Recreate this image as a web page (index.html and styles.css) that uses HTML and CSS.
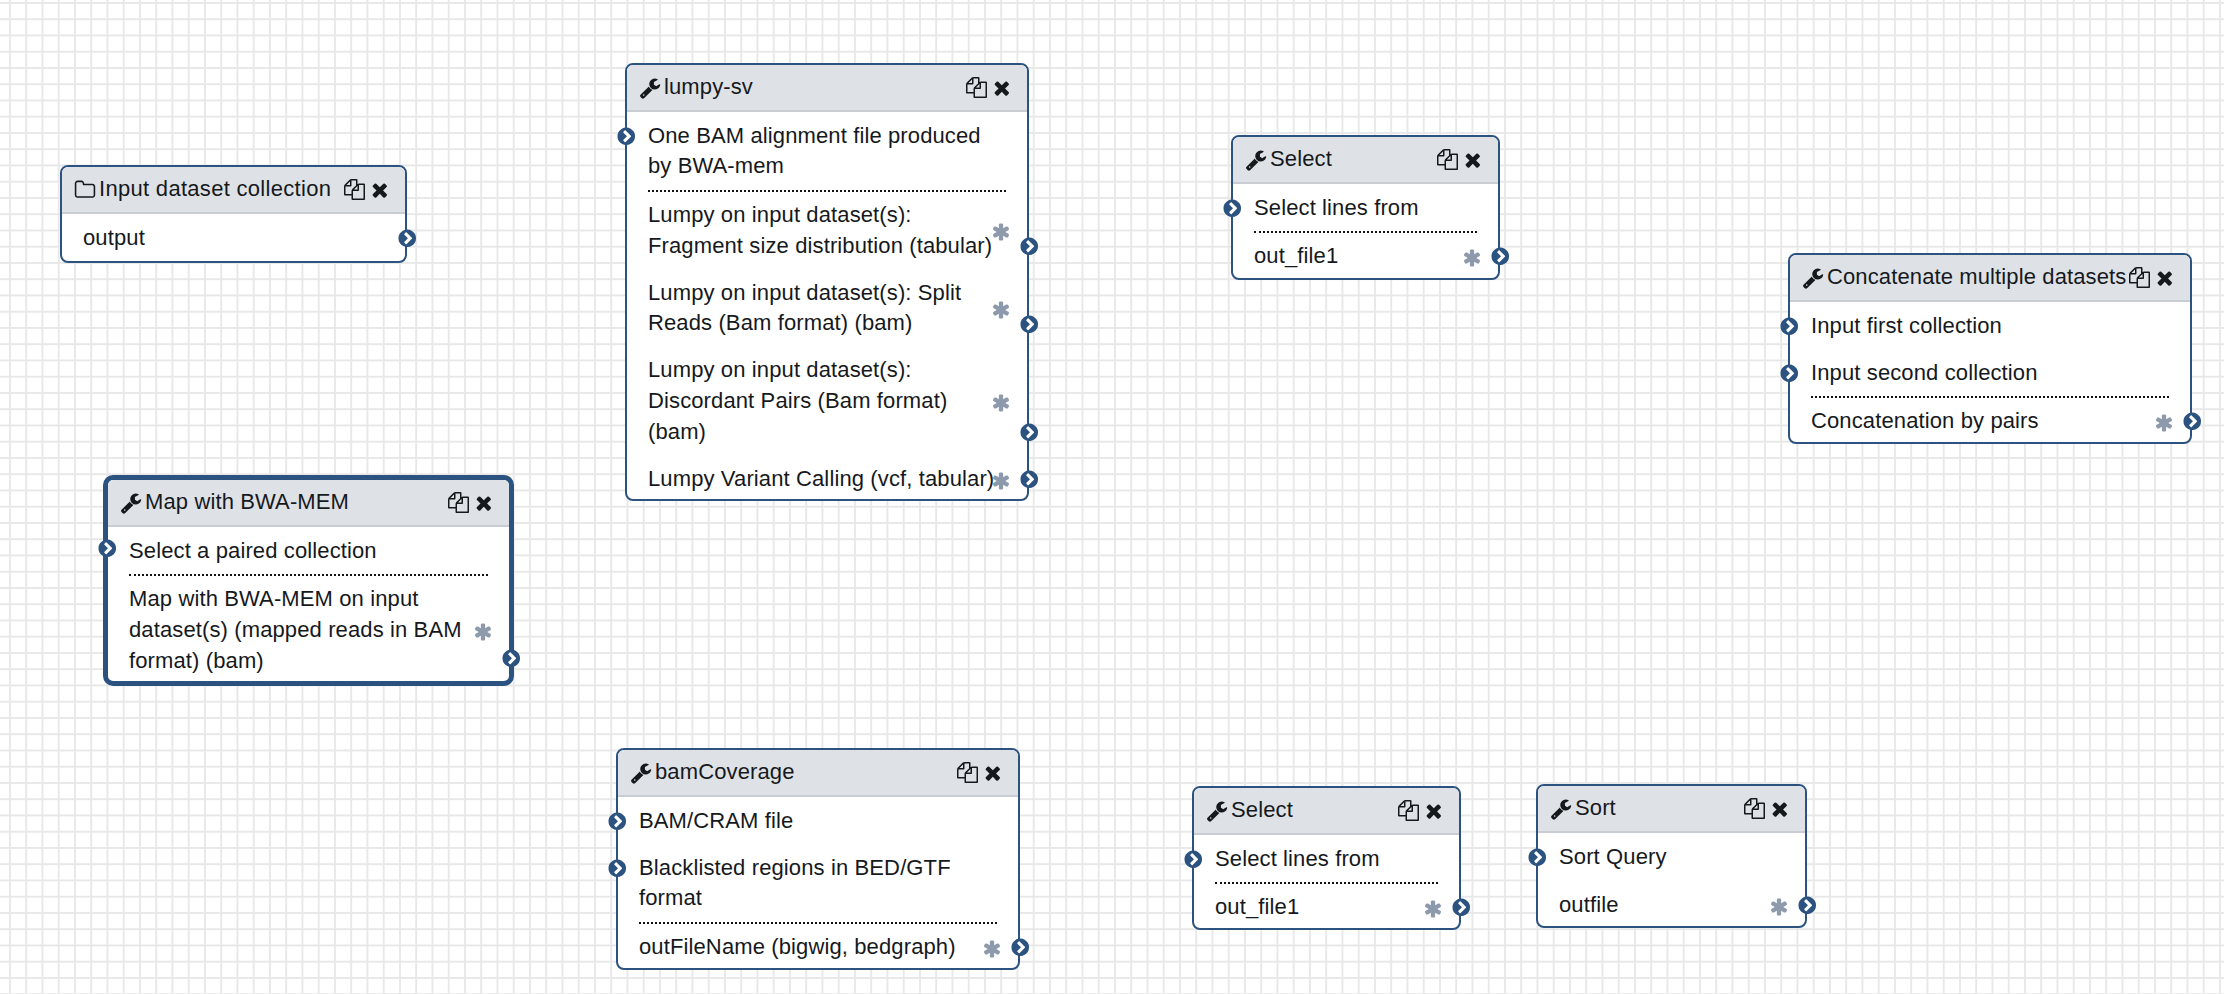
FILE: index.html
```html
<!DOCTYPE html>
<html lang="en">
<head>
  <meta charset="UTF-8">
  <title>Workflow editor</title>
  <link rel="stylesheet" href="styles.css">
</head>
<body>
  <svg class="defs" width="0" height="0">
    <symbol id="i-wrench" viewBox="0 0 1792 1792"><path d="M448 1472q0-26-19-45t-45-19-45 19-19 45 19 45 45 19 45-19 19-45zm644-420l-682 682q-37 37-90 37-52 0-91-37l-106-108q-38-36-38-90 0-53 38-91l681-681q39 98 114.500 173.500t173.500 114.500zm634-435q0 39-23 106-47 134-164.500 217.500t-258.500 83.500q-185 0-316.500-131.500t-131.500-316.500 131.500-316.500 316.500-131.500q58 0 121.500 16.500t107.500 46.500q16 11 16 28t-16 28l-293 169v224l193 107q5-3 79-48.500t135.500-81 70.500-35.500q15 0 23.500 10t8.500 25z"/></symbol>
    <symbol id="i-folder" viewBox="0 0 1792 1792"><path d="M1600 1312v-704q0-40-28-68t-68-28h-704q-40 0-68-28t-28-68v-64q0-40-28-68t-68-28h-320q-40 0-68 28t-28 68v960q0 40 28 68t68 28h1216q40 0 68-28t28-68zm128-704v704q0 92-66 158t-158 66h-1216q-92 0-158-66t-66-158v-960q0-92 66-158t158-66h320q92 0 158 66t66 158v32h672q92 0 158 66t66 158z"/></symbol>
    <symbol id="i-copy" viewBox="0 0 1792 1792"><path d="M1696 384q40 0 68 28t28 68v1216q0 40-28 68t-68 28h-960q-40 0-68-28t-28-68v-288h-544q-40 0-68-28t-28-68v-672q0-40 20-88t48-76l408-408q28-28 76-48t88-20h416q40 0 68 28t28 68v328q68-40 128-40h416zm-544 213l-299 299h299v-299zm-640-384l-299 299h299v-299zm196 647l316-316v-416h-384v416q0 40-28 68t-68 28h-416v640h512v-256q0-40 20-88t48-76zm956 804v-1152h-384v416q0 40-28 68t-68 28h-416v640h896z"/></symbol>
    <symbol id="i-times" viewBox="0 0 1792 1792"><path d="M1490 1322q0 40-28 68l-136 136q-28 28-68 28t-68-28l-294-294-294 294q-28 28-68 28t-68-28l-136-136q-28-28-28-68t28-68l294-294-294-294q-28-28-28-68t28-68l136-136q28-28 68-28t68 28l294 294 294-294q28-28 68-28t68 28l136 136q28 28 28 68t-28 68l-294 294 294 294q28 28 28 68z"/></symbol>
    <symbol id="i-star" viewBox="0 0 1792 1792"><path d="M1546 1050q46 26 59.500 77.500t-12.500 97.500l-64 110q-26 46-77.500 59.500t-97.500-12.500l-266-153v307q0 52-38 90t-90 38h-128q-52 0-90-38t-38-90v-307l-266 153q-46 26-97.500 12.500t-77.500-59.500l-64-110q-26-46-12.500-97.500t59.500-77.500l266-154-266-154q-46-26-59.500-77.500t12.500-97.500l64-110q26-46 77.500-59.500t97.500 12.500l266 153v-307q0-52 38-90t90-38h128q52 0 90 38t38 90v307l266-153q46-26 97.500-12.500t77.500 59.500l64 110q26 46 12.500 97.500t-59.500 77.500l-266 154z"/></symbol>
    <symbol id="i-port" viewBox="0 0 1792 1792"><path fill="#fff" d="M896 300a600 600 0 1 0 1 0z"/><path d="M845 1395l454-454q19-19 19-45t-19-45l-454-454q-19-19-45-19t-45 19l-102 102q-19 19-19 45t19 45l307 307-307 307q-19 19-19 45t19 45l102 102q19 19 45 19t45-19zm819-499q0 209-103 385.500t-279.500 279.500-385.500 103-385.500-103-279.500-279.500-103-385.500 103-385.500 279.500-279.500 385.500-103 385.500 103 279.500 279.500 103 385.500z"/></symbol>
  </svg>

  <div class="canvas">

    <div class="node node-input">
      <div class="node-head">
        <svg class="ic-type"><use href="#i-folder"/></svg>
        <span class="node-title">Input dataset collection</span>
        <svg class="ic-copy"><use href="#i-copy"/></svg>
        <svg class="ic-close"><use href="#i-times"/></svg>
      </div>
      <div class="node-body">
        <div class="row out">output<svg class="port"><use href="#i-port"/></svg></div>
      </div>
    </div>

    <div class="node node-map active">
      <div class="node-head">
        <svg class="ic-type"><use href="#i-wrench"/></svg>
        <span class="node-title">Map with BWA-MEM</span>
        <svg class="ic-copy"><use href="#i-copy"/></svg>
        <svg class="ic-close"><use href="#i-times"/></svg>
      </div>
      <div class="node-body">
        <div class="row in"><svg class="port"><use href="#i-port"/></svg>Select a paired collection</div>
        <div class="rule"></div>
        <div class="row out">Map with BWA-MEM on input dataset(s) (mapped reads in BAM format) (bam)<svg class="star"><use href="#i-star"/></svg><svg class="port"><use href="#i-port"/></svg></div>
      </div>
    </div>

    <div class="node node-lumpy">
      <div class="node-head">
        <svg class="ic-type"><use href="#i-wrench"/></svg>
        <span class="node-title">lumpy-sv</span>
        <svg class="ic-copy"><use href="#i-copy"/></svg>
        <svg class="ic-close"><use href="#i-times"/></svg>
      </div>
      <div class="node-body">
        <div class="row in"><svg class="port"><use href="#i-port"/></svg>One BAM alignment file produced by BWA-mem</div>
        <div class="rule"></div>
        <div class="row out">Lumpy on input dataset(s): Fragment size distribution (tabular)<svg class="star"><use href="#i-star"/></svg><svg class="port"><use href="#i-port"/></svg></div>
        <div class="row out">Lumpy on input dataset(s): Split Reads (Bam format) (bam)<svg class="star"><use href="#i-star"/></svg><svg class="port"><use href="#i-port"/></svg></div>
        <div class="row out">Lumpy on input dataset(s): Discordant Pairs (Bam format) (bam)<svg class="star"><use href="#i-star"/></svg><svg class="port"><use href="#i-port"/></svg></div>
        <div class="row out">Lumpy Variant Calling (vcf, tabular)<svg class="star"><use href="#i-star"/></svg><svg class="port"><use href="#i-port"/></svg></div>
      </div>
    </div>

    <div class="node node-cov">
      <div class="node-head">
        <svg class="ic-type"><use href="#i-wrench"/></svg>
        <span class="node-title">bamCoverage</span>
        <svg class="ic-copy"><use href="#i-copy"/></svg>
        <svg class="ic-close"><use href="#i-times"/></svg>
      </div>
      <div class="node-body">
        <div class="row in"><svg class="port"><use href="#i-port"/></svg>BAM/CRAM file</div>
        <div class="row in"><svg class="port"><use href="#i-port"/></svg>Blacklisted regions in BED/GTF format</div>
        <div class="rule"></div>
        <div class="row out">outFileName (bigwig, bedgraph)<svg class="star"><use href="#i-star"/></svg><svg class="port"><use href="#i-port"/></svg></div>
      </div>
    </div>

    <div class="node node-sel1">
      <div class="node-head">
        <svg class="ic-type"><use href="#i-wrench"/></svg>
        <span class="node-title">Select</span>
        <svg class="ic-copy"><use href="#i-copy"/></svg>
        <svg class="ic-close"><use href="#i-times"/></svg>
      </div>
      <div class="node-body">
        <div class="row in"><svg class="port"><use href="#i-port"/></svg>Select lines from</div>
        <div class="rule"></div>
        <div class="row out">out_file1<svg class="star"><use href="#i-star"/></svg><svg class="port"><use href="#i-port"/></svg></div>
      </div>
    </div>

    <div class="node node-sel2">
      <div class="node-head">
        <svg class="ic-type"><use href="#i-wrench"/></svg>
        <span class="node-title">Select</span>
        <svg class="ic-copy"><use href="#i-copy"/></svg>
        <svg class="ic-close"><use href="#i-times"/></svg>
      </div>
      <div class="node-body">
        <div class="row in"><svg class="port"><use href="#i-port"/></svg>Select lines from</div>
        <div class="rule"></div>
        <div class="row out">out_file1<svg class="star"><use href="#i-star"/></svg><svg class="port"><use href="#i-port"/></svg></div>
      </div>
    </div>

    <div class="node node-sort">
      <div class="node-head">
        <svg class="ic-type"><use href="#i-wrench"/></svg>
        <span class="node-title">Sort</span>
        <svg class="ic-copy"><use href="#i-copy"/></svg>
        <svg class="ic-close"><use href="#i-times"/></svg>
      </div>
      <div class="node-body">
        <div class="row in"><svg class="port"><use href="#i-port"/></svg>Sort Query</div>
        <div class="row out">outfile<svg class="star"><use href="#i-star"/></svg><svg class="port"><use href="#i-port"/></svg></div>
      </div>
    </div>

    <div class="node node-concat">
      <div class="node-head">
        <svg class="ic-type"><use href="#i-wrench"/></svg>
        <span class="node-title">Concatenate multiple datasets</span>
        <svg class="ic-copy"><use href="#i-copy"/></svg>
        <svg class="ic-close"><use href="#i-times"/></svg>
      </div>
      <div class="node-body">
        <div class="row in"><svg class="port"><use href="#i-port"/></svg>Input first collection</div>
        <div class="row in"><svg class="port"><use href="#i-port"/></svg>Input second collection</div>
        <div class="rule"></div>
        <div class="row out">Concatenation by pairs<svg class="star"><use href="#i-star"/></svg><svg class="port"><use href="#i-port"/></svg></div>
      </div>
    </div>

  </div>
</body>
</html>
```

FILE: styles.css
```css
html, body {
  margin: 0;
  height: 100%;
  overflow: hidden;
}

body {
  font-family: "Liberation Sans", Arial, sans-serif;
  font-size: 22px;
  line-height: 30.7px;
  letter-spacing: 0.12px;
  color: #16191c;
  background: #fff;
}

.defs {
  position: absolute;
}

.canvas {
  position: relative;
  width: 2224px;
  height: 994px;
  background-color: #fff;
  background-image:
    linear-gradient(#e8e8e8 2px, transparent 2px),
    linear-gradient(90deg, #e8e8e8 2px, transparent 2px);
  background-size: 16.25px 16.25px;
  background-position: 9px 2px;
}

.node {
  position: absolute;
  box-sizing: border-box;
  border: 2px solid #2c5380;
  border-radius: 8px;
  background: #fff;
}

.node.active {
  border-width: 5px;
  border-radius: 10px;
}

.node-input { left: 60px; top: 165px; width: 347px; }
.node-map { left: 103px; top: 475px; width: 411px; }
.node-lumpy { left: 625px; top: 63px; width: 404px; }
.node-cov { left: 616px; top: 748px; width: 404px; }
.node-sel1 { left: 1231px; top: 135px; width: 269px; }
.node-sel2 { left: 1192px; top: 786px; width: 269px; }
.node-sort { left: 1536px; top: 784px; width: 271px; }
.node-concat { left: 1788px; top: 253px; width: 404px; }

.node-input .node-title {
  letter-spacing: 0.3px;
}

.node-input .node-body {
  padding-bottom: 8px;
}

.node-sel1 .node-body {
  padding-bottom: 6px;
}

.node-sort .node-body {
  padding-bottom: 6px;
}

.node-sort .row + .row {
  margin-top: 17.5px;
}

.node-head {
  display: flex;
  align-items: center;
  box-sizing: border-box;
  height: 47px;
  padding: 0 14px 0 12px;
  background: #dee2e7;
  border-bottom: 2px solid #c8ccd3;
  border-radius: 6px 6px 0 0;
}

.node-title {
  flex: 1;
  white-space: nowrap;
}

.ic-type {
  width: 22px;
  height: 22px;
  margin-right: 3px;
  fill: #16191c;
  flex: none;
}

.ic-copy {
  width: 21px;
  height: 21px;
  fill: #16191c;
  flex: none;
}

.ic-close {
  width: 21.6px;
  height: 21.6px;
  margin-left: 4px;
  fill: #16191c;
  flex: none;
}

.node-body {
  padding: 8.5px 21px 5px;
}

.row {
  position: relative;
}

.row + .row {
  margin-top: 16.3px;
}

.row.out {
  padding-right: 10px;
}

.rule {
  height: 2px;
  border-top: 2px dotted #111;
  margin: 8px 0;
  box-sizing: border-box;
}

.port {
  position: absolute;
  width: 20.5px;
  height: 20.5px;
  fill: #2c5380;
}

.row.in .port {
  left: -32px;
  top: 5px;
}

.row.out .port {
  right: -33px;
  bottom: 5px;
}

.node.active .port {
  margin-top: -3px;
  margin-bottom: 3px;
}

.star {
  position: absolute;
  right: -5px;
  top: calc(50% - 8.5px);
  width: 20px;
  height: 20px;
  fill: #8d9aac;
}
```
